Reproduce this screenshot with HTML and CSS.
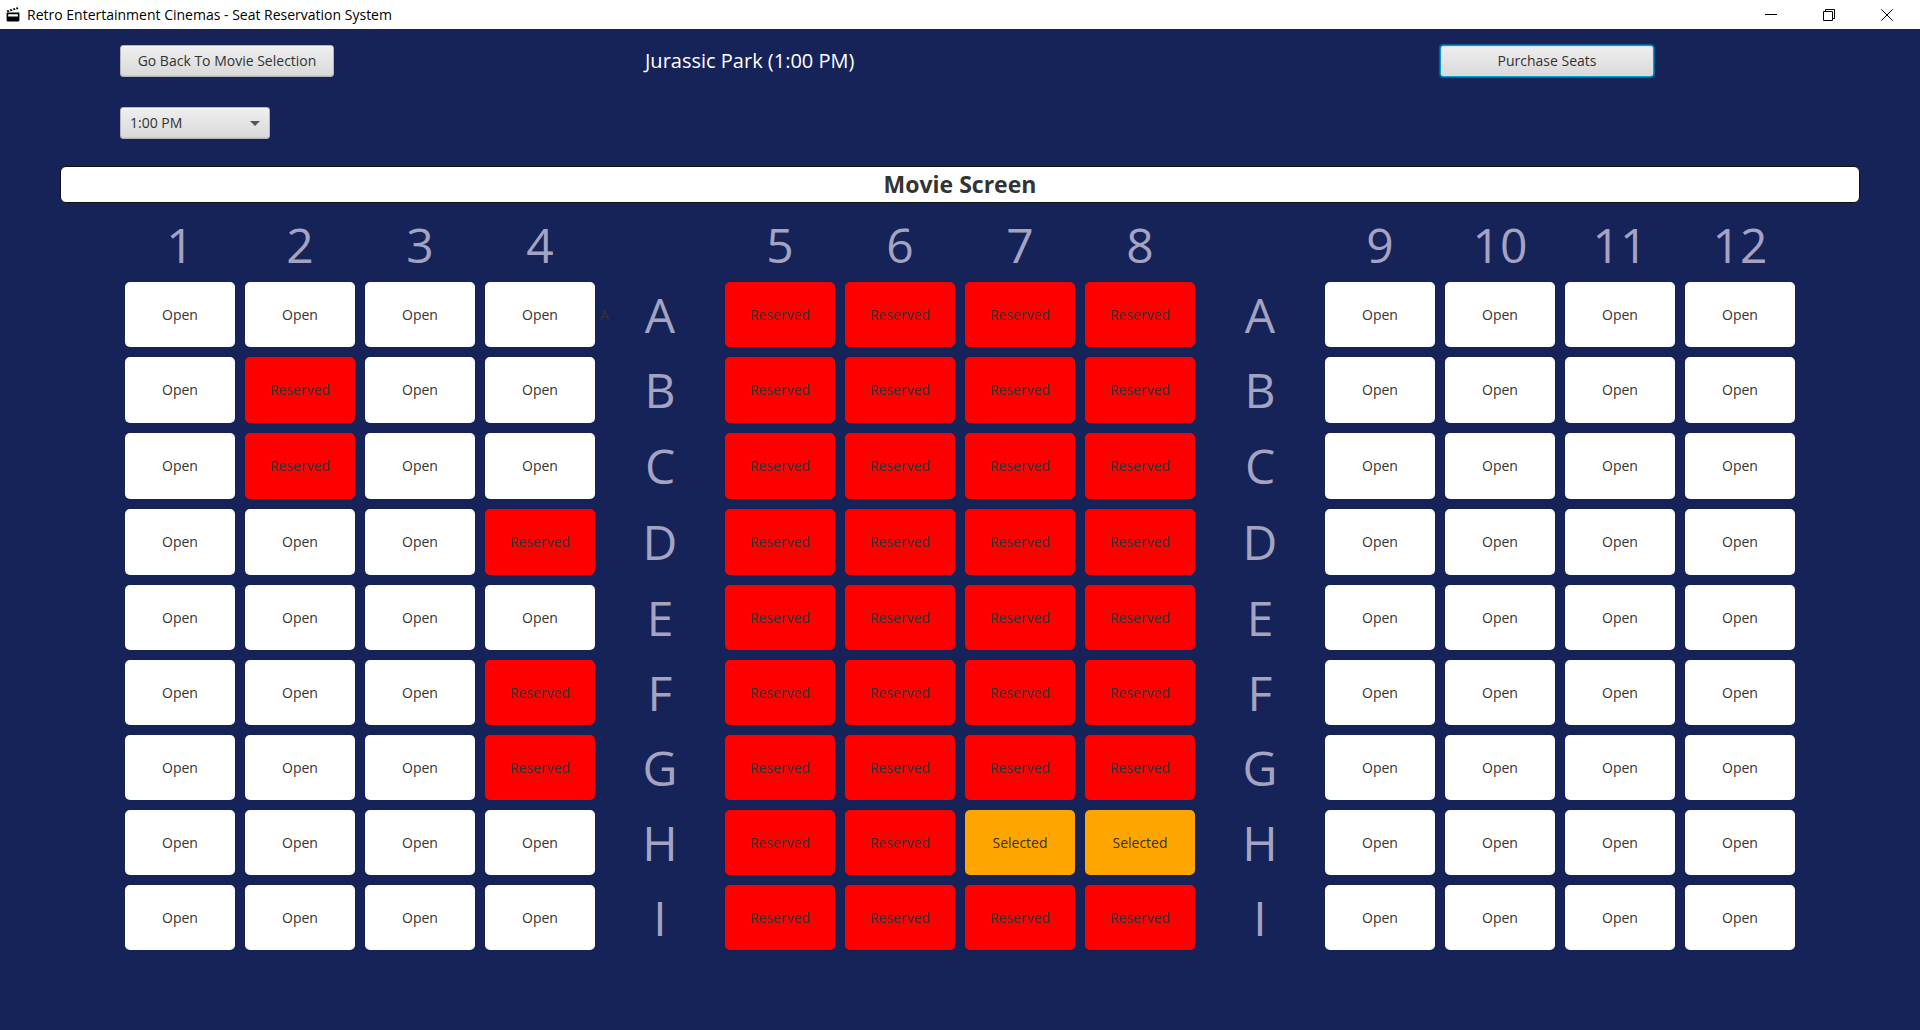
FILE: index.html
```html
<!DOCTYPE html>
<html lang="en">
<head>
<meta charset="utf-8">
<title>Retro Entertainment Cinemas - Seat Reservation System</title>
<link rel="stylesheet" href="styles.css">
</head>
<body>
<header class="titlebar">
  <svg class="app-icon" viewBox="0 0 14 15" aria-hidden="true">
    <path d="M0.6 3.6 2.4 3 3.6 4.6 1.6 5.2zM3.6 2.6 5.4 2 6.6 3.6 4.7 4.2zM6.7 1.7 8.5 1.1 9.7 2.7 7.8 3.3zM9.8 .8 11.8 .2 12.4 1.9 10.8 2.4z"/>
    <path fill-rule="evenodd" d="M.6 5.6H13.4V13.2Q13.4 14.6 12 14.6H2Q.6 14.6.6 13.2zM2.2 7.2V9.6H11.9V7.2z"/>
  </svg>
  <span class="app-title">Retro Entertainment Cinemas - Seat Reservation System</span>
  <button class="win-btn" type="button" aria-label="Minimize"><svg viewBox="0 0 12 12"><path d="M0 5.5H12"/></svg></button>
  <button class="win-btn" type="button" aria-label="Restore"><svg viewBox="0 0 12 12"><path d="M.5 2.5H9.5V11.5H.5zM2.5 2.5V.5H11.5V9.5H9.5"/></svg></button>
  <button class="win-btn" type="button" aria-label="Close"><svg viewBox="0 0 12 12"><path d="M.3.3 11.7 11.7M11.7.3.3 11.7"/></svg></button>
</header>
<main class="content">
  <div class="toolbar">
    <button class="btn" type="button">Go Back To Movie Selection</button>
    <h1 class="movie">Jurassic Park (1:00 PM)</h1>
    <button class="btn btn-focus" type="button">Purchase Seats</button>
  </div>
  <div class="showtime">
    <select class="time-select" aria-label="Showtime"><option>1:00 PM</option></select>
    <svg class="arrow" viewBox="0 0 10 5" aria-hidden="true"><path d="M0 0H10L5 5z"/></svg>
  </div>
  <div class="screen">Movie Screen</div>
  <div class="seats">
    <span class="mark">1</span><span class="mark">2</span><span class="mark">3</span><span class="mark">4</span><span></span>
    <span class="mark">5</span><span class="mark">6</span><span class="mark">7</span><span class="mark">8</span><span></span>
    <span class="mark">9</span><span class="mark">10</span><span class="mark">11</span><span class="mark">12</span>

    <button class="seat">Open</button><button class="seat">Open</button><button class="seat">Open</button><button class="seat">Open</button>
    <span class="mark"><small class="note">A</small>A</span>
    <button class="seat reserved">Reserved</button><button class="seat reserved">Reserved</button><button class="seat reserved">Reserved</button><button class="seat reserved">Reserved</button>
    <span class="mark">A</span>
    <button class="seat">Open</button><button class="seat">Open</button><button class="seat">Open</button><button class="seat">Open</button>

    <button class="seat">Open</button><button class="seat reserved">Reserved</button><button class="seat">Open</button><button class="seat">Open</button>
    <span class="mark">B</span>
    <button class="seat reserved">Reserved</button><button class="seat reserved">Reserved</button><button class="seat reserved">Reserved</button><button class="seat reserved">Reserved</button>
    <span class="mark">B</span>
    <button class="seat">Open</button><button class="seat">Open</button><button class="seat">Open</button><button class="seat">Open</button>

    <button class="seat">Open</button><button class="seat reserved">Reserved</button><button class="seat">Open</button><button class="seat">Open</button>
    <span class="mark">C</span>
    <button class="seat reserved">Reserved</button><button class="seat reserved">Reserved</button><button class="seat reserved">Reserved</button><button class="seat reserved">Reserved</button>
    <span class="mark">C</span>
    <button class="seat">Open</button><button class="seat">Open</button><button class="seat">Open</button><button class="seat">Open</button>

    <button class="seat">Open</button><button class="seat">Open</button><button class="seat">Open</button><button class="seat reserved">Reserved</button>
    <span class="mark">D</span>
    <button class="seat reserved">Reserved</button><button class="seat reserved">Reserved</button><button class="seat reserved">Reserved</button><button class="seat reserved">Reserved</button>
    <span class="mark">D</span>
    <button class="seat">Open</button><button class="seat">Open</button><button class="seat">Open</button><button class="seat">Open</button>

    <button class="seat">Open</button><button class="seat">Open</button><button class="seat">Open</button><button class="seat">Open</button>
    <span class="mark">E</span>
    <button class="seat reserved">Reserved</button><button class="seat reserved">Reserved</button><button class="seat reserved">Reserved</button><button class="seat reserved">Reserved</button>
    <span class="mark">E</span>
    <button class="seat">Open</button><button class="seat">Open</button><button class="seat">Open</button><button class="seat">Open</button>

    <button class="seat">Open</button><button class="seat">Open</button><button class="seat">Open</button><button class="seat reserved">Reserved</button>
    <span class="mark">F</span>
    <button class="seat reserved">Reserved</button><button class="seat reserved">Reserved</button><button class="seat reserved">Reserved</button><button class="seat reserved">Reserved</button>
    <span class="mark">F</span>
    <button class="seat">Open</button><button class="seat">Open</button><button class="seat">Open</button><button class="seat">Open</button>

    <button class="seat">Open</button><button class="seat">Open</button><button class="seat">Open</button><button class="seat reserved">Reserved</button>
    <span class="mark">G</span>
    <button class="seat reserved">Reserved</button><button class="seat reserved">Reserved</button><button class="seat reserved">Reserved</button><button class="seat reserved">Reserved</button>
    <span class="mark">G</span>
    <button class="seat">Open</button><button class="seat">Open</button><button class="seat">Open</button><button class="seat">Open</button>

    <button class="seat">Open</button><button class="seat">Open</button><button class="seat">Open</button><button class="seat">Open</button>
    <span class="mark">H</span>
    <button class="seat reserved">Reserved</button><button class="seat reserved">Reserved</button><button class="seat selected">Selected</button><button class="seat selected">Selected</button>
    <span class="mark">H</span>
    <button class="seat">Open</button><button class="seat">Open</button><button class="seat">Open</button><button class="seat">Open</button>

    <button class="seat">Open</button><button class="seat">Open</button><button class="seat">Open</button><button class="seat">Open</button>
    <span class="mark">I</span>
    <button class="seat reserved">Reserved</button><button class="seat reserved">Reserved</button><button class="seat reserved">Reserved</button><button class="seat reserved">Reserved</button>
    <span class="mark">I</span>
    <button class="seat">Open</button><button class="seat">Open</button><button class="seat">Open</button><button class="seat">Open</button>
  </div>
</main>
</body>
</html>
```
FILE: styles.css
```css
* { box-sizing: border-box; }

body {
  margin: 0;
  min-height: 100vh;
  background: #162359;
  color: #333;
  font-family: "Segoe UI", "Open Sans", "Noto Sans", sans-serif;
  font-size: 14px;
  line-height: 20px;
}

button, select { font: inherit; color: inherit; }

.titlebar {
  display: flex;
  align-items: center;
  height: 29px;
  padding: 0 4px 0 6px;
  background: #fff;
  color: #000;
}

.app-icon { width: 14px; height: 15px; margin-right: 7px; }
.app-title { flex: 1; }

.win-btn {
  display: flex;
  align-items: center;
  justify-content: center;
  width: 58px;
  height: 28px;
  padding: 0;
  border: 0;
  background: none;
}

.win-btn svg { width: 12px; height: 12px; fill: none; stroke: #000; }

.content { padding: 16px 60px 60px; }

.toolbar {
  display: grid;
  grid-template-columns: 4fr 7fr 3fr;
  align-items: center;
  margin: 0 60px 30px;
}

.btn, .time-select {
  height: 32px;
  border: 1px solid #b5b5b8;
  border-radius: 3px;
  background: linear-gradient(#efefef, #d9d9d9);
  box-shadow: inset 0 1px #fbfbfb, inset 0 -1px #c9cbcd;
}

.btn { width: 214px; padding: 0; }

.btn-focus {
  border-color: #039ed3;
  box-shadow: inset 0 0 0 1px #cfe3ea, 0 0 1px 1px #07639a;
}

.movie {
  margin: 0;
  padding-left: 45px;
  color: #fff;
  font-size: 20px;
  font-weight: 400;
  line-height: 28px;
}

.showtime {
  display: grid;
  width: 150px;
  margin: 0 60px 27px;
  align-items: center;
}

.time-select {
  grid-area: 1 / 1;
  padding: 0 9px;
  appearance: none;
}

.arrow {
  grid-area: 1 / 1;
  justify-self: end;
  width: 10px;
  height: 5px;
  margin-right: 10px;
  fill: #555;
  pointer-events: none;
}

.screen {
  height: 37px;
  border: 1px solid #111;
  border-radius: 6px;
  background: #fff;
  font-size: 23px;
  font-weight: 700;
  line-height: 34px;
  text-align: center;
}

.seats {
  display: grid;
  grid-template-columns: repeat(14, 1fr);
  grid-template-rows: 54px 65px repeat(3, 66px) repeat(5, 65px);
  gap: 10px;
  margin: 15px 65px 0;
}

.mark {
  display: grid;
  place-items: center;
  color: #a4a3c1;
  font-size: 48px;
  line-height: 54px;
}

.mark > .note {
  position: absolute;
  color: #333;
  font-size: 14px;
  line-height: 20px;
}

/* Small row label at the left edge of the aisle */
.mark:has(.note) { position: relative; }
.mark > .note { left: -5px; }

.seat {
  padding: 0;
  border: 0;
  border-radius: 5px;
  background: #fff;
}

.reserved { background: #f00; }
.selected { background: #ffa500; }
```
